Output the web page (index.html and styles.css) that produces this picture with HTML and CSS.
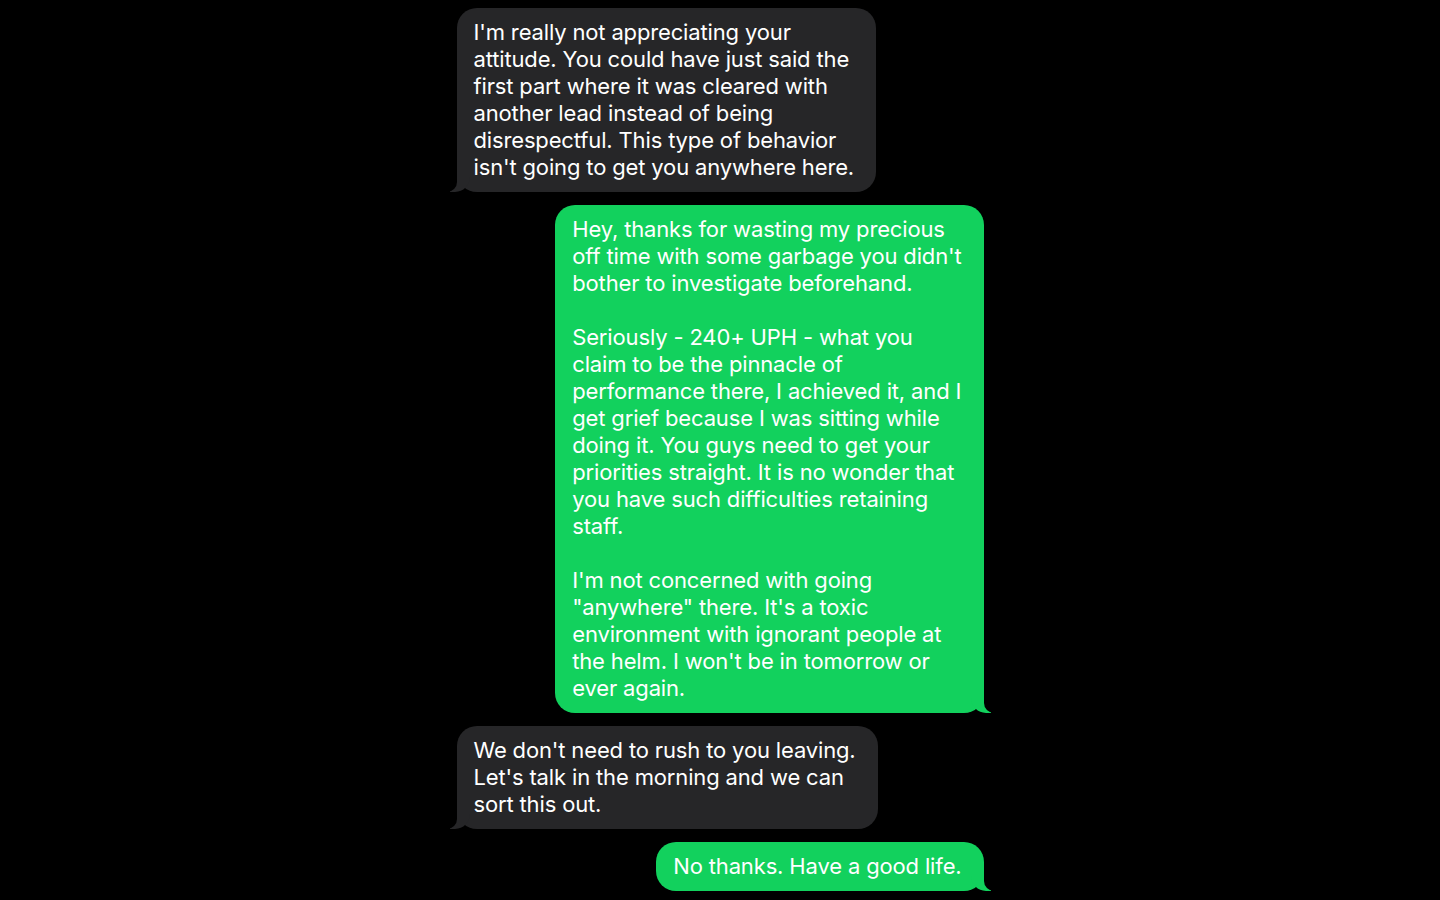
FILE: index.html
```html
<!DOCTYPE html>
<html lang="en">
<head>
    <meta charset="UTF-8">
    <meta name="viewport" content="width=device-width, initial-scale=1.0">
    <title>Messages</title>
    <link rel="stylesheet" href="styles.css">
</head>
<body>

    <div class="thread">
        <div class="bubble received">
            I'm really not appreciating your<br>
            attitude. You could have just said the<br>
            first part where it was cleared with<br>
            another lead instead of being<br>
            disrespectful. This type of behavior<br>
            isn't going to get you anywhere here.
        </div>

        <div class="bubble sent">
            <p>Hey, thanks for wasting my precious<br>
            off time with some garbage you didn't<br>
            bother to investigate beforehand.</p>
            <p>Seriously - 240+ UPH - what you<br>
            claim to be the pinnacle of<br>
            performance there, I achieved it, and I<br>
            get grief because I was sitting while<br>
            doing it. You guys need to get your<br>
            priorities straight. It is no wonder that<br>
            you have such difficulties retaining<br>
            staff.</p>
            <p>I'm not concerned with going<br>
            "anywhere" there. It's a toxic<br>
            environment with ignorant people at<br>
            the helm. I won't be in tomorrow or<br>
            ever again.</p>
        </div>

        <div class="bubble received">
            We don't need to rush to you leaving.<br>
            Let's talk in the morning and we can<br>
            sort this out.
        </div>

        <div class="bubble sent">
            No thanks. Have a good life.
        </div>
    </div>

</body>
</html>
```

FILE: styles.css
```css
body {
    margin: 0;
    background: #000;
    font-family: 'Inter', 'Roboto', sans-serif;
    color: #fff;
}
.thread {
    width: 527px;
    margin: 0 auto;
    padding-top: 8px;
    display: flex;
    flex-direction: column;
    gap: 13px;
}
.bubble {
    position: relative;
    padding: 11px 22px 11px 17px;
    border-radius: 20px;
    font-size: 22px;
    line-height: 27px;
    letter-spacing: -0.15px;
}
.bubble p {
    margin: 0 0 27px;
}
.bubble p:last-child {
    margin-bottom: 0;
}
.received {
    align-self: flex-start;
    background: #262628;
}
.sent {
    align-self: flex-end;
    background: #12d15d;
}

/* tails */
.bubble::before,
.bubble::after {
    content: "";
    position: absolute;
    bottom: 0;
    height: 20px;
}
.received::before {
    left: -7px;
    width: 20px;
    background: #262628;
    border-bottom-right-radius: 15px;
}
.received::after {
    left: -10px;
    width: 10px;
    background: #000;
    border-bottom-right-radius: 10px;
}
.sent::before {
    right: -7px;
    width: 20px;
    background: #12d15d;
    border-bottom-left-radius: 15px;
}
.sent::after {
    right: -10px;
    width: 10px;
    background: #000;
    border-bottom-left-radius: 10px;
}
```
